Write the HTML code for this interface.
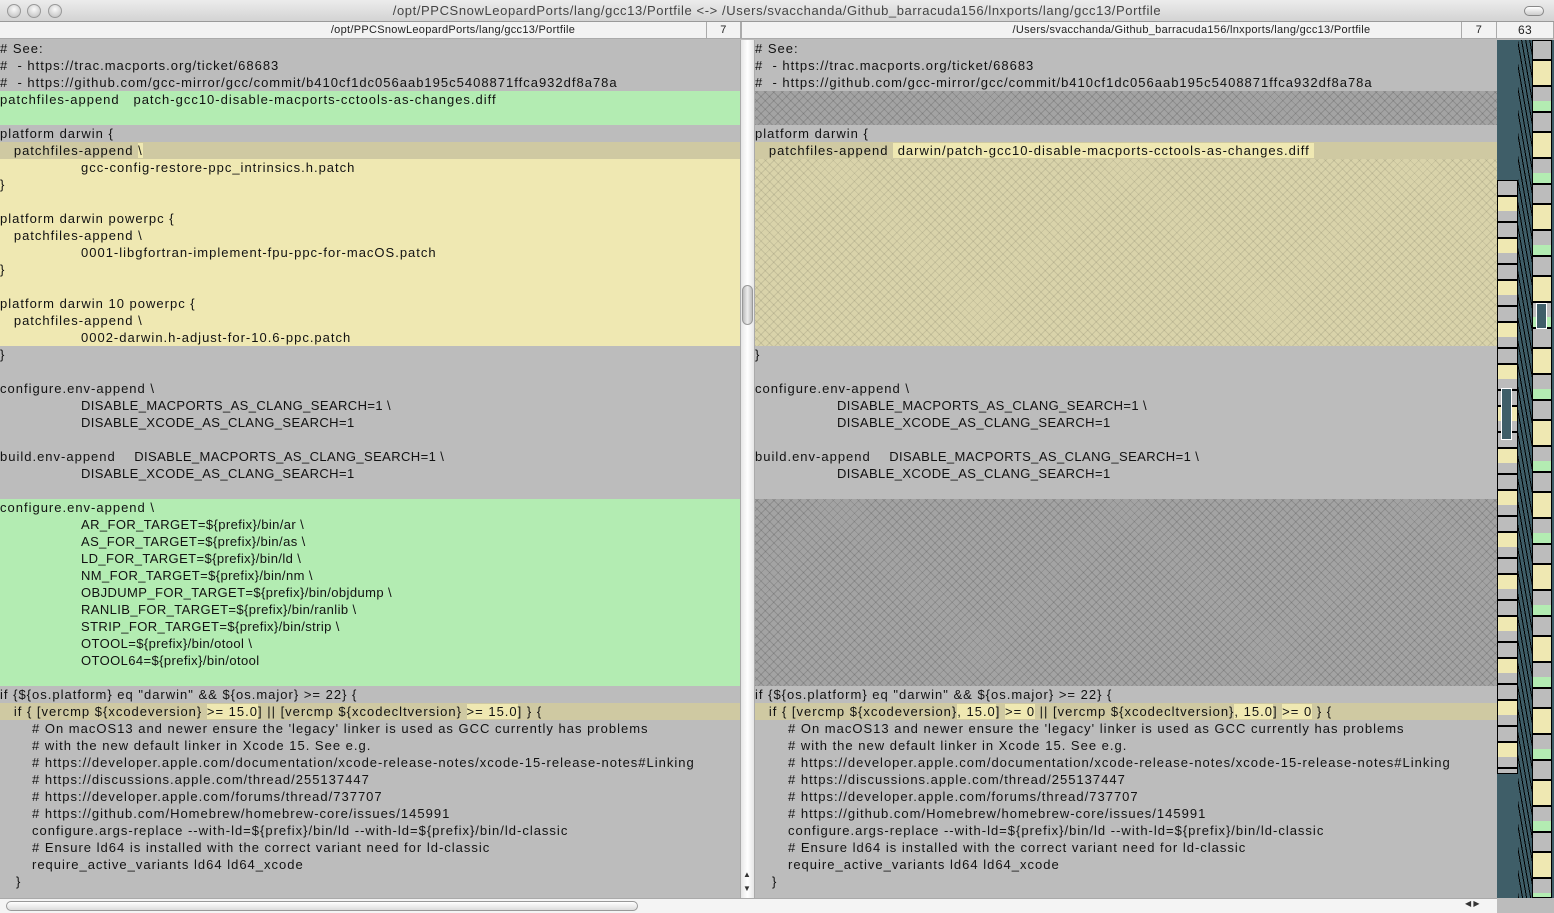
<!DOCTYPE html>
<html><head><meta charset="utf-8"><style>
*{margin:0;padding:0;box-sizing:border-box}
body{width:1554px;height:913px;overflow:hidden;background:#bcbcbc;font-family:"Liberation Sans",sans-serif;font-size:13px;color:#111;position:relative}
.tb{position:absolute;left:0;top:0;width:1554px;height:22px;background:linear-gradient(#ececec,#d3d3d3);border-bottom:1px solid #999;font-size:13px;color:#444;text-align:center;line-height:22px;letter-spacing:0.6px}
.dot{position:absolute;top:4px;width:14px;height:14px;border-radius:50%;background:radial-gradient(circle at 50% 35%,#fafafa,#bbb);border:1px solid #999}
.hd{position:absolute;top:22px;height:17px;background:#f2f2f2;border-bottom:1px solid #aaa;border-right:1px solid #aaa;font-size:11px;line-height:16px;text-align:center;color:#222;letter-spacing:0.3px}
.pane{position:absolute;top:40px;height:858px;overflow:hidden;letter-spacing:1px}
.l{position:absolute;left:0;right:0;height:17px;line-height:17px;white-space:pre}
.c{letter-spacing:.4px}
.g{background:#b3ecb2}.y{background:#efe8b2}.dy{background:#cfc9a2}
.hg{background-color:#a3a3a3;background-image:repeating-linear-gradient(45deg,rgba(0,0,0,.13) 0 1px,transparent 1px 6px),repeating-linear-gradient(-45deg,rgba(0,0,0,.13) 0 1px,transparent 1px 6px)}
.hy{background-color:#d9d3aa;background-image:repeating-linear-gradient(45deg,rgba(0,0,0,.09) 0 1px,transparent 1px 6px),repeating-linear-gradient(-45deg,rgba(0,0,0,.09) 0 1px,transparent 1px 6px)}
.hl{background:#efe8b2}
.ov{position:absolute;left:1497px;top:40px;width:57px;height:858px;background:#3f5e68}
.col{position:absolute;border:1px solid #000;background:#bcbcbc}
</style></head><body>
<div class="tb"><div class="dot" style="left:7px"></div><div class="dot" style="left:27px"></div><div class="dot" style="left:48px"></div>/opt/PPCSnowLeopardPorts/lang/gcc13/Portfile &lt;-&gt; /Users/svacchanda/Github_barracuda156/lnxports/lang/gcc13/Portfile
<div style="position:absolute;right:10px;top:6px;width:20px;height:10px;border-radius:5px;border:1px solid #888;background:linear-gradient(#fff,#ccc)"></div></div>
<div class="hd" style="left:0;width:707px;padding-left:200px">/opt/PPCSnowLeopardPorts/lang/gcc13/Portfile</div>
<div class="hd" style="left:707px;width:34px">7</div>
<div class="hd" style="left:741px;width:721px;padding-left:180px;border-left:1px solid #aaa">/Users/svacchanda/Github_barracuda156/lnxports/lang/gcc13/Portfile</div>
<div class="hd" style="left:1462px;width:35px">7</div>
<div class="hd" style="left:1497px;width:57px;font-size:12px">63</div>

<div class="pane" style="left:0;width:740px">
<div class="l" style="top:0"># See:</div>
<div class="l" style="top:17px">#  - https://trac.macports.org/ticket/68683</div>
<div class="l" style="top:34px">#  - https://github.com/gcc-mirror/gcc/commit/b410cf1dc056aab195c5408871ffca932df8a78a</div>
<div class="l g" style="top:51px;height:34px">patchfiles-append   patch-gcc10-disable-macports-cctools-as-changes.diff</div>
<div class="l" style="top:85px">platform darwin {</div>
<div class="l dy" style="top:102px">   patchfiles-append <span class="hl">\</span></div>
<div class="l y" style="top:119px;height:187px"></div>
<div class="l" style="top:119px;left:81px">gcc-config-restore-ppc_intrinsics.h.patch</div>
<div class="l" style="top:136px">}</div>
<div class="l" style="top:170px">platform darwin powerpc {</div>
<div class="l" style="top:187px">   patchfiles-append \</div>
<div class="l" style="top:204px;left:81px">0001-libgfortran-implement-fpu-ppc-for-macOS.patch</div>
<div class="l" style="top:221px">}</div>
<div class="l" style="top:255px">platform darwin 10 powerpc {</div>
<div class="l" style="top:272px">   patchfiles-append \</div>
<div class="l" style="top:289px;left:81px">0002-darwin.h-adjust-for-10.6-ppc.patch</div>
<div class="l" style="top:306px">}</div>
<div class="l" style="top:340px">configure.env-append \</div>
<div class="l c" style="top:357px;left:81px">DISABLE_MACPORTS_AS_CLANG_SEARCH=1 \</div>
<div class="l c" style="top:374px;left:81px">DISABLE_XCODE_AS_CLANG_SEARCH=1</div>
<div class="l" style="top:408px">build.env-append    <span class="c">DISABLE_MACPORTS_AS_CLANG_SEARCH=1 \</span></div>
<div class="l c" style="top:425px;left:81px">DISABLE_XCODE_AS_CLANG_SEARCH=1</div>
<div class="l g" style="top:459px;height:187px"></div>
<div class="l" style="top:459px">configure.env-append \</div>
<div class="l c" style="top:476px;left:81px">AR_FOR_TARGET=${prefix}/bin/ar \</div>
<div class="l c" style="top:493px;left:81px">AS_FOR_TARGET=${prefix}/bin/as \</div>
<div class="l c" style="top:510px;left:81px">LD_FOR_TARGET=${prefix}/bin/ld \</div>
<div class="l c" style="top:527px;left:81px">NM_FOR_TARGET=${prefix}/bin/nm \</div>
<div class="l c" style="top:544px;left:81px">OBJDUMP_FOR_TARGET=${prefix}/bin/objdump \</div>
<div class="l c" style="top:561px;left:81px">RANLIB_FOR_TARGET=${prefix}/bin/ranlib \</div>
<div class="l c" style="top:578px;left:81px">STRIP_FOR_TARGET=${prefix}/bin/strip \</div>
<div class="l c" style="top:595px;left:81px">OTOOL=${prefix}/bin/otool \</div>
<div class="l c" style="top:612px;left:81px">OTOOL64=${prefix}/bin/otool</div>
<div class="l" style="top:646px">if {${os.platform} eq "darwin" &amp;&amp; ${os.major} &gt;= 22} {</div>
<div class="l dy" style="top:663px">   if { [vercmp ${xcodeversion} <span class="hl">&gt;= 15.0</span>] || [vercmp ${xcodecltversion} <span class="hl">&gt;= 15.0</span>] } {</div>
<div class="l" style="top:680px;left:32px"># On macOS13 and newer ensure the 'legacy' linker is used as GCC currently has problems</div>
<div class="l" style="top:697px;left:32px"># with the new default linker in Xcode 15. See e.g.</div>
<div class="l" style="top:714px;left:32px"># https://developer.apple.com/documentation/xcode-release-notes/xcode-15-release-notes#Linking</div>
<div class="l" style="top:731px;left:32px"># https://discussions.apple.com/thread/255137447</div>
<div class="l" style="top:748px;left:32px"># https://developer.apple.com/forums/thread/737707</div>
<div class="l" style="top:765px;left:32px"># https://github.com/Homebrew/homebrew-core/issues/145991</div>
<div class="l" style="top:782px;left:32px">configure.args-replace --with-ld=${prefix}/bin/ld --with-ld=${prefix}/bin/ld-classic</div>
<div class="l" style="top:799px;left:32px"># Ensure ld64 is installed with the correct variant need for ld-classic</div>
<div class="l" style="top:816px;left:32px">require_active_variants ld64 ld64_xcode</div>
<div class="l" style="top:833px;left:16px">}</div>
</div>

<div style="position:absolute;left:740px;top:40px;width:15px;height:858px;background:linear-gradient(90deg,#e6e6e6,#fff,#e6e6e6);border-left:1px solid #aaa;border-right:1px solid #aaa"></div>
<div style="position:absolute;left:742px;top:285px;width:11px;height:40px;border-radius:6px;background:linear-gradient(90deg,#bbb,#eee,#bbb);border:1px solid #999"></div>
<div style="position:absolute;left:743px;top:868px;font-size:8px;line-height:14px;color:#333">▲<br>▼</div>

<div class="pane" style="left:755px;width:742px">
<div class="l" style="top:0"># See:</div>
<div class="l" style="top:17px">#  - https://trac.macports.org/ticket/68683</div>
<div class="l" style="top:34px">#  - https://github.com/gcc-mirror/gcc/commit/b410cf1dc056aab195c5408871ffca932df8a78a</div>
<div class="l hg" style="top:51px;height:34px"></div>
<div class="l" style="top:85px">platform darwin {</div>
<div class="l dy" style="top:102px">   patchfiles-append <span class="hl"> darwin/patch-gcc10-disable-macports-cctools-as-changes.diff </span></div>
<div class="l hy" style="top:119px;height:187px"></div>
<div class="l" style="top:306px">}</div>
<div class="l" style="top:340px">configure.env-append \</div>
<div class="l c" style="top:357px;left:82px">DISABLE_MACPORTS_AS_CLANG_SEARCH=1 \</div>
<div class="l c" style="top:374px;left:82px">DISABLE_XCODE_AS_CLANG_SEARCH=1</div>
<div class="l" style="top:408px">build.env-append    <span class="c">DISABLE_MACPORTS_AS_CLANG_SEARCH=1 \</span></div>
<div class="l c" style="top:425px;left:82px">DISABLE_XCODE_AS_CLANG_SEARCH=1</div>
<div class="l hg" style="top:459px;height:187px"></div>
<div class="l" style="top:646px">if {${os.platform} eq "darwin" &amp;&amp; ${os.major} &gt;= 22} {</div>
<div class="l dy" style="top:663px">   if { [vercmp ${xcodeversion}<span class="hl">, 15.0</span>] <span class="hl">&gt;= 0</span> || [vercmp ${xcodecltversion}<span class="hl">, 15.0</span>] <span class="hl">&gt;= 0</span> } {</div>
<div class="l" style="top:680px;left:33px"># On macOS13 and newer ensure the 'legacy' linker is used as GCC currently has problems</div>
<div class="l" style="top:697px;left:33px"># with the new default linker in Xcode 15. See e.g.</div>
<div class="l" style="top:714px;left:33px"># https://developer.apple.com/documentation/xcode-release-notes/xcode-15-release-notes#Linking</div>
<div class="l" style="top:731px;left:33px"># https://discussions.apple.com/thread/255137447</div>
<div class="l" style="top:748px;left:33px"># https://developer.apple.com/forums/thread/737707</div>
<div class="l" style="top:765px;left:33px"># https://github.com/Homebrew/homebrew-core/issues/145991</div>
<div class="l" style="top:782px;left:33px">configure.args-replace --with-ld=${prefix}/bin/ld --with-ld=${prefix}/bin/ld-classic</div>
<div class="l" style="top:799px;left:33px"># Ensure ld64 is installed with the correct variant need for ld-classic</div>
<div class="l" style="top:816px;left:33px">require_active_variants ld64 ld64_xcode</div>
<div class="l" style="top:833px;left:17px">}</div>
</div>

<div class="ov">
 <div class="col" style="left:0;top:140px;width:21px;height:594px;background:repeating-linear-gradient(#bcbcbc 0 14px,#000 14px 16px,#efe8b2 16px 30px,#bcbcbc 30px 40px,#000 40px 42px)"></div>
 <div class="col" style="left:35px;top:0;width:20px;height:858px;background:repeating-linear-gradient(#bcbcbc 0 18px,#000 18px 20px,#efe8b2 20px 44px,#000 44px 46px,#bcbcbc 46px 60px,#b3ecb2 60px 70px,#000 70px 72px)"></div>
 <div style="position:absolute;left:21px;top:0;width:14px;height:858px;background:repeating-linear-gradient(80deg,#000 0 1px,transparent 1px 4px)"></div>
 <div style="position:absolute;left:4px;top:348px;width:11px;height:52px;background:#3f5e68;border:1px solid #fff"></div>
 <div style="position:absolute;left:39px;top:263px;width:11px;height:26px;background:#3f5e68;border:1px solid #fff"></div>
</div>

<div style="position:absolute;left:0;top:898px;width:1497px;height:15px;background:#f4f4f4;border-top:1px solid #aaa"></div>
<div style="position:absolute;left:6px;top:901px;width:632px;height:10px;border-radius:5px;background:linear-gradient(#fff,#ddd);border:1px solid #999"></div>
<div style="position:absolute;left:1465px;top:899px;font-size:8px;color:#333">◀ ▶</div>
</body></html>
